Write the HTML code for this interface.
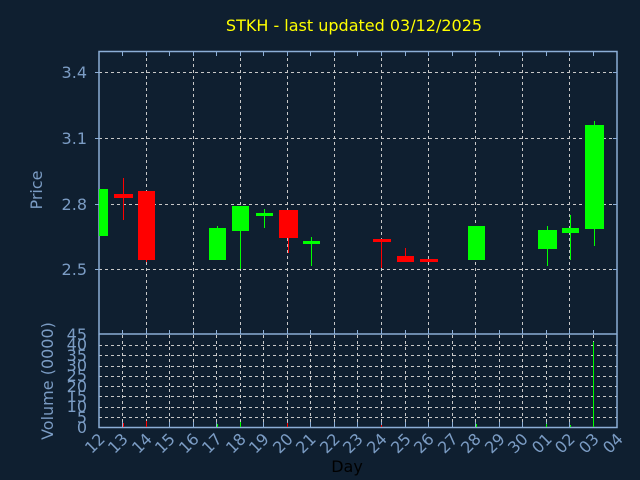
<!DOCTYPE html>
<html><head><meta charset="utf-8"><style>
html,body{margin:0;padding:0;background:#0f1f30;width:640px;height:480px;overflow:hidden}
svg{display:block}
text{font-family:"DejaVu Sans","Liberation Sans",sans-serif}
</style></head><body>
<svg width="640" height="480" xmlns="http://www.w3.org/2000/svg">
<rect width="640" height="480" fill="#0f1f30"/>
<text x="354" y="31" fill="#ffff00" font-size="16" text-anchor="middle">STKH - last updated 03/12/2025</text>
<g stroke="#c8c8c8" stroke-width="1" stroke-dasharray="3,3" fill="none">
<path d="M99 72.5H617M99 138.5H617M99 204.5H617M99 269.5H617"/>
<path d="M146.5 52V334M193.5 52V334M240.5 52V334M287.5 52V334M334.5 52V334M381.5 52V334M428.5 52V334M475.5 52V334M522.5 52V334M569.5 52V334"/>
<path d="M99 345.5H617M99 355.5H617M99 366.5H617M99 376.5H617M99 386.5H617M99 396.5H617M99 407.5H617M99 417.5H617"/>
<path d="M122.5 335V427M146.5 335V427M169.5 335V427M193.5 335V427M216.5 335V427M240.5 335V427M263.5 335V427M287.5 335V427M310.5 335V427M334.5 335V427M357.5 335V427M381.5 335V427M405.5 335V427M428.5 335V427M452.5 335V427M475.5 335V427M499.5 335V427M522.5 335V427M546.5 335V427M569.5 335V427M593.5 335V427"/>
</g>
<g fill="none" stroke="#8caed6" stroke-width="1.5">
<rect x="99" y="51.5" width="518" height="282.5"/>
<path d="M99 334.5V427.5H617V334.5"/>
</g>
<g stroke="#8caed6" stroke-width="1">
<path d="M99 72.5h-4M99 138.5h-4M99 204.5h-4M99 269.5h-4M617 72.5h-4M617 138.5h-4M617 204.5h-4M617 269.5h-4"/>
<path d="M122.5 427v-5M146.5 427v-5M169.5 427v-5M193.5 427v-5M216.5 427v-5M240.5 427v-5M263.5 427v-5M287.5 427v-5M310.5 427v-5M334.5 427v-5M357.5 427v-5M381.5 427v-5M405.5 427v-5M428.5 427v-5M452.5 427v-5M475.5 427v-5M499.5 427v-5M522.5 427v-5M546.5 427v-5M569.5 427v-5M593.5 427v-5"/>
<path d="M122.5 52v4M146.5 52v4M169.5 52v4M193.5 52v4M216.5 52v4M240.5 52v4M263.5 52v4M287.5 52v4M310.5 52v4M334.5 52v4M357.5 52v4M381.5 52v4M405.5 52v4M428.5 52v4M452.5 52v4M475.5 52v4M499.5 52v4M522.5 52v4M546.5 52v4M569.5 52v4M593.5 52v4"/>
<path d="M122.5 334v-4M146.5 334v-4M169.5 334v-4M193.5 334v-4M216.5 334v-4M240.5 334v-4M263.5 334v-4M287.5 334v-4M310.5 334v-4M334.5 334v-4M357.5 334v-4M381.5 334v-4M405.5 334v-4M428.5 334v-4M452.5 334v-4M475.5 334v-4M499.5 334v-4M522.5 334v-4M546.5 334v-4M569.5 334v-4M593.5 334v-4"/>
</g>
<g fill="#7b9cc4" font-size="16" text-anchor="end">
<text x="87" y="78">3.4</text><text x="87" y="144">3.1</text><text x="87" y="210">2.8</text><text x="87" y="275">2.5</text>
<text x="87" y="433">0</text><text x="87" y="423">5</text><text x="87" y="412">10</text><text x="87" y="402">15</text><text x="87" y="392">20</text><text x="87" y="381">25</text><text x="87" y="371">30</text><text x="87" y="361">35</text><text x="87" y="350">40</text><text x="87" y="340">45</text>
</g>
<text transform="translate(42,190) rotate(-90)" fill="#7b9cc4" font-size="16" text-anchor="middle">Price</text>
<text transform="translate(53,381) rotate(-90)" fill="#7b9cc4" font-size="16" text-anchor="middle">Volume (0000)</text>
<text x="347" y="472" fill="#000" font-size="16" text-anchor="middle">Day</text>
<g fill="#7b9cc4" font-size="16" text-anchor="end">
<text transform="translate(106,440) rotate(-45)">12</text>
<text transform="translate(129,440) rotate(-45)">13</text>
<text transform="translate(153,440) rotate(-45)">14</text>
<text transform="translate(176,440) rotate(-45)">15</text>
<text transform="translate(200,440) rotate(-45)">16</text>
<text transform="translate(223,440) rotate(-45)">17</text>
<text transform="translate(247,440) rotate(-45)">18</text>
<text transform="translate(270,440) rotate(-45)">19</text>
<text transform="translate(294,440) rotate(-45)">20</text>
<text transform="translate(317,440) rotate(-45)">21</text>
<text transform="translate(341,440) rotate(-45)">22</text>
<text transform="translate(364,440) rotate(-45)">23</text>
<text transform="translate(388,440) rotate(-45)">24</text>
<text transform="translate(412,440) rotate(-45)">25</text>
<text transform="translate(435,440) rotate(-45)">26</text>
<text transform="translate(459,440) rotate(-45)">27</text>
<text transform="translate(482,440) rotate(-45)">28</text>
<text transform="translate(506,440) rotate(-45)">29</text>
<text transform="translate(529,440) rotate(-45)">30</text>
<text transform="translate(553,440) rotate(-45)">01</text>
<text transform="translate(576,440) rotate(-45)">02</text>
<text transform="translate(600,440) rotate(-45)">03</text>
<text transform="translate(624,440) rotate(-45)">04</text>
</g>
<!-- candles -->
<g fill="#00ff00" stroke="none">
<rect x="99" y="189" width="9" height="47"/>
<rect x="209" y="228" width="17" height="32"/><rect x="217" y="226" width="1" height="3"/>
<rect x="232" y="206" width="17" height="25"/><rect x="240" y="230" width="1" height="39"/>
<rect x="256" y="213" width="17" height="3"/><rect x="264" y="209" width="1" height="19"/>
<rect x="303" y="241" width="17" height="3"/><rect x="311" y="237" width="1" height="29"/>
<rect x="468" y="226" width="17" height="34"/>
<rect x="538" y="230" width="19" height="19"/><rect x="547" y="226" width="1" height="40"/>
<rect x="562" y="228" width="17" height="5"/><rect x="570" y="215" width="1" height="45"/>
<rect x="585" y="125" width="19" height="104"/><rect x="594" y="121" width="1" height="125"/>
<rect x="593" y="342" width="1" height="85"/>
<rect x="240" y="422" width="1" height="5"/><rect x="546" y="424" width="1" height="3"/><rect x="570" y="425" width="1" height="2"/><rect x="476" y="424" width="1" height="3"/><rect x="217" y="424" width="1" height="3"/>
</g>
<g fill="#ff0000" stroke="none">
<rect x="114" y="194" width="19" height="4"/><rect x="123" y="178" width="1" height="42"/>
<rect x="138" y="191" width="17" height="69"/><rect x="146" y="259" width="1" height="3"/>
<rect x="279" y="210" width="19" height="28"/><rect x="288" y="237" width="1" height="16"/>
<rect x="373" y="239" width="18" height="3"/><rect x="381" y="241" width="1" height="27"/>
<rect x="397" y="256" width="17" height="6"/><rect x="405" y="248" width="1" height="9"/>
<rect x="420" y="259" width="18" height="3"/>
<rect x="146" y="421" width="1" height="6"/><rect x="123" y="423" width="1" height="4"/><rect x="287" y="423" width="1" height="4"/><rect x="381" y="425" width="1" height="2"/>
</g>
</svg>
</body></html>
